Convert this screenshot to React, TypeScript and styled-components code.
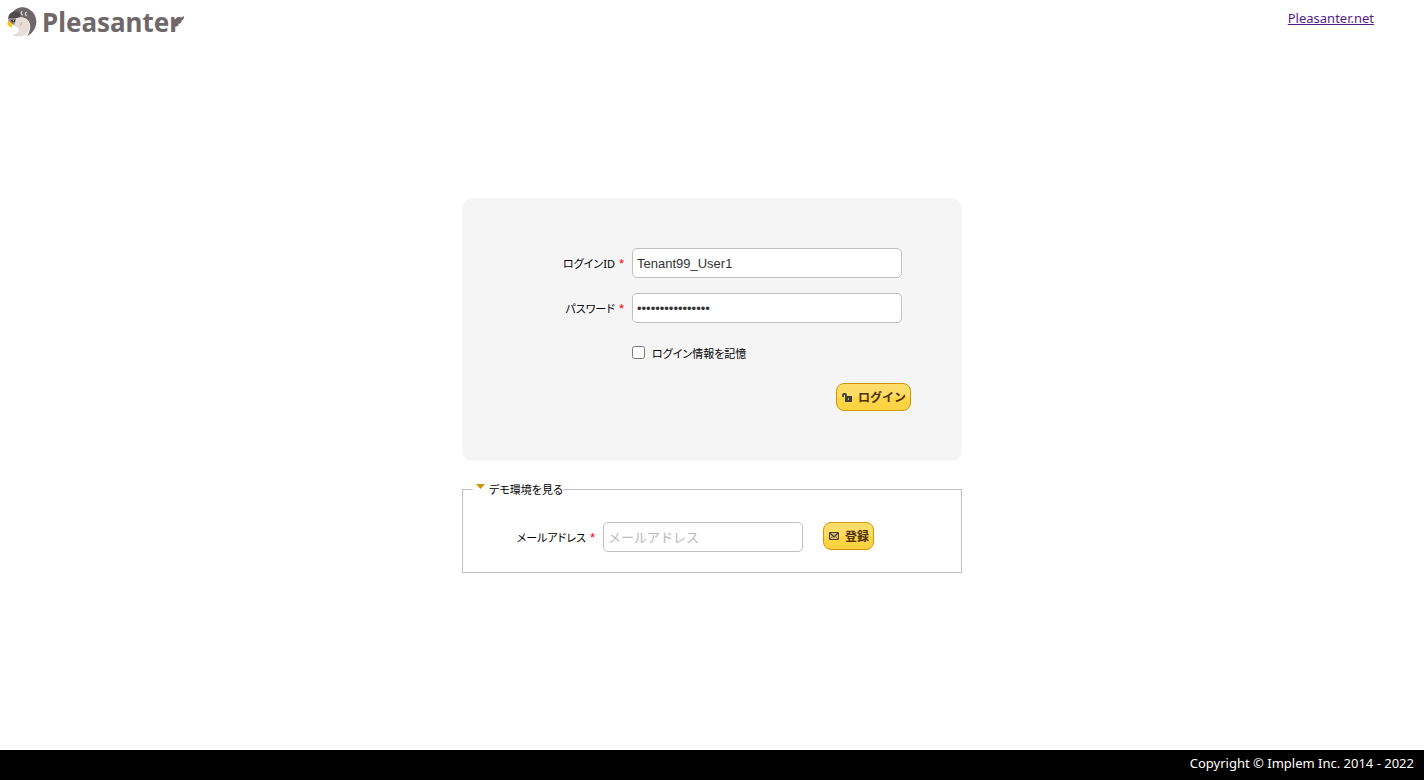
import React from "react";
import styled, { createGlobalStyle } from "styled-components";

const GlobalStyle = createGlobalStyle`
  *, *::before, *::after { box-sizing: border-box; }
  body {
    margin: 0;
    background: #fff;
    color: #000;
    font-family: "Noto Sans", "Noto Sans CJK JP", sans-serif;
    font-size: 11px;
  }
`;

const Page = styled.div`
  display: flex;
  flex-direction: column;
  min-height: 100vh;
`;

const Header = styled.header`
  display: flex;
  justify-content: space-between;
  align-items: flex-start;
  height: 48px;
  padding: 4px 50px 0 5px;
`;

const LogoLink = styled.a`
  display: block;
  line-height: 0;
`;

const NavLink = styled.a`
  margin-top: 4px;
  color: #551a8b;
  font-size: 13px;
  line-height: 20px;
`;

const Main = styled.main`
  flex: 1;
  width: 100%;
  max-width: 500px;
  margin: 0 auto;
  padding-top: 150px;
`;

const LoginForm = styled.form`
  display: flex;
  flex-direction: column;
  gap: 15px;
  padding: 50px;
  border-radius: 10px;
  background: #f5f5f5;
`;

const Field = styled.div`
  display: flex;
  align-items: center;
  height: 30px;
`;

const Label = styled.label<{ $width: number }>`
  width: ${(p) => p.$width}px;
  padding: 2px 8px 0 0;
  line-height: 20px;
  text-align: right;
  font-feature-settings: "palt";
`;

const Required = styled.span`
  margin-left: 4px;
  color: #f00;
  font-family: "Liberation Sans", sans-serif;
  font-size: 13px;
`;

const TextInput = styled.input<{ $width: number }>`
  width: ${(p) => p.$width}px;
  height: 30px;
  padding: 0 4px;
  border: 1px solid #c0c0c0;
  border-radius: 5px;
  background: #fff;
  color: #333;
  font-family: "Liberation Sans", "Noto Sans CJK JP", sans-serif;
  font-size: 13px;
  outline: none;

  &::placeholder {
    color: #b8b8b8;
    opacity: 1;
  }
`;

const CheckField = styled(Field)`
  padding-left: 120px;
`;

const Checkbox = styled.input`
  width: 13px;
  height: 13px;
  margin: 0 7px 2px 0;
`;

const CheckLabel = styled.label`
  padding-top: 2px;
  line-height: 20px;
  font-feature-settings: "palt";
`;

const Actions = styled.div`
  display: flex;
  justify-content: flex-end;
  padding-right: 1px;
`;

const Button = styled.button`
  display: inline-flex;
  align-items: center;
  gap: 5px;
  height: 28px;
  padding: 0 4px;
  border: 1px solid #d19405;
  border-radius: 8px;
  background: linear-gradient(#ffdd6b 0%, #ffdb62 50%, #ffd54c 52%, #ffd23f 100%);
  color: #4c3000;
  font-family: "Noto Sans CJK JP", sans-serif;
  font-size: 12px;
  font-weight: 700;
  line-height: 18px;
  cursor: pointer;
`;

const DemoSet = styled.fieldset`
  margin: 18px 0 0;
  padding: 23px 10px 20px;
  border: 1px solid #c0c0c0;
`;

const Legend = styled.legend`
  display: flex;
  align-items: center;
  gap: 4px;
  height: 20px;
  padding: 0 0 0 3px;
  line-height: 20px;
  font-feature-settings: "palt";
`;

const LegendText = styled.span`
  padding-top: 2px;
`;

const Caret = styled.svg`
  margin-bottom: 6px;
`;

const DemoRow = styled.div`
  display: flex;
  align-items: flex-start;
  gap: 20px;
`;

const Footer = styled.footer`
  height: 30px;
  padding: 0 10px;
  background: #000;
  color: #fff;
  font-size: 13px;
  line-height: 26px;
  text-align: right;
`;

function Logo() {
  return (
    <svg width="182" height="36" viewBox="5 4 182 36" role="img" aria-label="Pleasanter">
      <g transform="scale(0.3333)">
        <path d="M34 42C42 28 56 21 70 22C92 25 108 42 109 64C109 84 99 100 82 108C92 92 93 76 86 64C78 52 60 48 44 56L30 60Z" fill="#6e6668" />
        <path d="M25 58C24 46 30 38 40 36C50 33 58 35 62 40L60 52L44 56Z" fill="#514a4d" />
        <path d="M27 54L48 54L52 66L46 78L36 72L24 68Z" fill="#8f888a" />
        <path d="M48 56C66 48 84 56 88 72C91 88 84 102 70 107C58 111 45 110 36 105C50 103 58 96 56 88C54 82 46 82 42 76L46 66Z" fill="#e8dcd6" />
        <path d="M32 60L46 59L44 66L36 67Z" fill="#332c30" />
        <circle cx="40" cy="62" r="2" fill="#f5c518" />
        <path d="M25 62C34 66 39 73 35 84C30 80 22 77 22 70Z" fill="#f7c516" />
        <path d="M66 34Q60 40 68 46M80 36Q72 42 80 48" fill="none" stroke="#d8cfcd" strokeWidth="4" />
        <path d="M57 68L61 72M66 68L62 76M58 78L62 76" fill="none" stroke="#a69b99" strokeWidth="2" />
      </g>
      <text x="42" y="32" fill="#6f6769" fontFamily="'Noto Sans', sans-serif" fontSize="26" fontWeight="700">
        Pleasanter
      </text>
      <path d="M173 24C174 19 179 19 184 16C184 19 183 20 181 21L182 21C181 23 180 24 178 24L179 25C177 27 175 26 173 28Z" fill="#6f6769" />
    </svg>
  );
}

function UnlockIcon() {
  return (
    <svg width="12" height="12" viewBox="0 0 12 12" aria-hidden="true">
      <path d="M2 6V4Q2 3 3 3H4Q5 3 5 4V6" fill="none" stroke="#3d3d3d" strokeWidth="1.800" />
      <path d="M4 5H11V11H4Z" fill="#3d3d3d" />
      <path d="M7 7H8V9H7Z" fill="#c9ab52" />
    </svg>
  );
}

function MailIcon() {
  return (
    <svg width="12" height="12" viewBox="0 0 12 12" aria-hidden="true">
      <path d="M1.500 2.500H10.500V9.500H1.500Z" fill="#d9bd6a" stroke="#4a4330" />
      <path d="M2 3L6 7L10 3" fill="none" stroke="#3d3d3d" strokeWidth="1.200" />
      <path d="M2 9L4.500 6.500M10 9L7.500 6.500" fill="none" stroke="#8a753c" />
    </svg>
  );
}

export default function App() {
  return (
    <>
      <GlobalStyle />
      <Page>
        <Header>
          <LogoLink href="#top">
            <Logo />
          </LogoLink>
          <NavLink href="#pleasanter">Pleasanter.net</NavLink>
        </Header>
        <Main>
          <LoginForm onSubmit={(e) => e.preventDefault()}>
            <Field>
              <Label htmlFor="login-id" $width={120}>
                ログインID<Required>*</Required>
              </Label>
              <TextInput id="login-id" type="text" defaultValue="Tenant99_User1" $width={270} />
            </Field>
            <Field>
              <Label htmlFor="password" $width={120}>
                パスワード<Required>*</Required>
              </Label>
              <TextInput id="password" type="password" defaultValue="passwordpassword" $width={270} />
            </Field>
            <CheckField>
              <Checkbox id="remember" type="checkbox" />
              <CheckLabel htmlFor="remember">ログイン情報を記憶</CheckLabel>
            </CheckField>
            <Actions>
              <Button type="submit">
                <UnlockIcon />
                ログイン
              </Button>
            </Actions>
          </LoginForm>
          <DemoSet>
            <Legend>
              <Caret width="9" height="5" viewBox="0 0 9 5" aria-hidden="true">
                <path d="M0 0H9L4.500 5Z" fill="#d19405" />
              </Caret>
              <LegendText>デモ環境を見る</LegendText>
            </Legend>
            <DemoRow>
              <Field>
                <Label htmlFor="mail" $width={130}>
                  メールアドレス<Required>*</Required>
                </Label>
                <TextInput id="mail" type="text" placeholder="メールアドレス" $width={200} />
              </Field>
              <Button type="button">
                <MailIcon />
                登録
              </Button>
            </DemoRow>
          </DemoSet>
        </Main>
        <Footer>Copyright © Implem Inc. 2014 - 2022</Footer>
      </Page>
    </>
  );
}
